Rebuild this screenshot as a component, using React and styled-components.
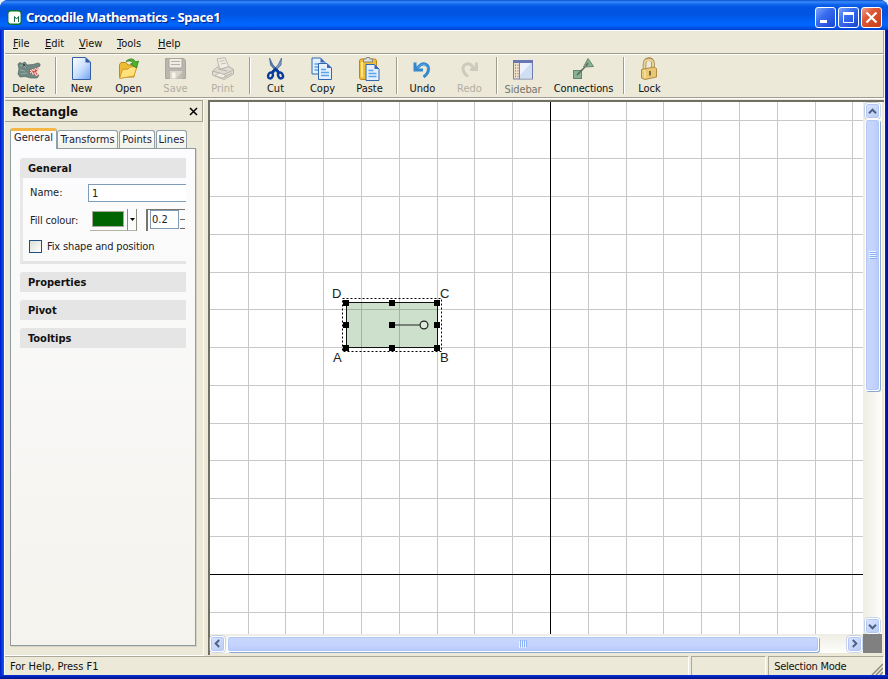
import React from "react";
import styled, { createGlobalStyle, css } from "styled-components";

const GlobalStyle = createGlobalStyle`
  * { box-sizing: border-box; }
  html, body { margin: 0; padding: 0; background: #e6edfb; overflow: hidden; }
  body {
    font-family: "DejaVu Sans Condensed", "DejaVu Sans", "Liberation Sans", sans-serif;
    font-stretch: condensed;
    font-size: 11px;
    line-height: 14px;
    color: #111;
  }
  svg { display: block; }
`;

const face = "#ece9d8";

const Window = styled.div`
  width: 888px;
  height: 679px;
  display: flex;
  flex-direction: column;
  border-radius: 8px 8px 0 0;
  overflow: hidden;
  background:
    linear-gradient(0deg, #00128c 0, #001fae 2px, #0831d9 4px, transparent 4px),
    linear-gradient(90deg, #0019c8 0, #0a3be0 2px, #1660e8 4px, #0831d9 10px, #0831d9 884px, #0a2fd6 885px, #0018b0 886px, #00129a 888px);
`;

const TitleBar = styled.header`
  height: 30px;
  flex: none;
  display: flex;
  align-items: center;
  padding: 4px 6px 0 7px;
  background: linear-gradient(180deg, #0a4fd0 0, #3a8dfa 2px, #1468f0 4px, #0055e2 7px, #0054e0 14px, #005ff5 20px, #0267ff 25px, #0059ee 27px, #003fcb 30px);
`;

const Title = styled.h1`
  flex: 1;
  margin: 0 0 0 4px;
  font: bold 13px/18px "Noto Sans", sans-serif;
  letter-spacing: -0.36px;
  color: #fff;
  text-shadow: 1px 1px 1px #0a1c7c;
`;

const Caption = styled.button`
  width: 21px;
  height: 21px;
  margin-left: 2px;
  padding: 0;
  border: 1px solid #fff;
  border-radius: 3px;
  background: ${(p) =>
    p.$close
      ? "linear-gradient(135deg, #f0a088 0, #dd5a38 35%, #c83c14 100%)"
      : "linear-gradient(135deg, #7ba4f8 0, #3a6cf0 40%, #1746d0 100%)"};
`;

const Body = styled.div`
  width: 881px;
  height: 645px;
  flex: none;
  margin-left: 4px;
  display: flex;
  flex-direction: column;
  background: ${face};
  border-left: 1px solid #fbfaf4;
  border-right: 1px solid #fbfaf4;
`;

const MenuBar = styled.nav`
  height: 24px;
  flex: none;
  display: flex;
  align-items: center;
  padding: 3px 0 0 8px;
  border-top: 1px solid #fff;
  border-bottom: 1px solid #9f9d8e;
  border-right: 1px solid #aca899;
`;

const MenuItem = styled.span`
  width: ${(p) => p.$w}px;
  &::first-letter { text-decoration: underline; }
`;

const ToolBar = styled.div`
  height: 44px;
  flex: none;
  display: flex;
  border-top: 1px solid #fff;
  border-bottom: 1px solid #9f9d8e;
  border-right: 1px solid #aca899;
`;

const ToolButton = styled.div`
  width: ${(p) => p.$w || 47}px;
  padding-top: ${(p) => (p.$low ? 3 : 2)}px;
  display: flex;
  flex-direction: column;
  align-items: center;
  gap: 1px;
  white-space: nowrap;
  letter-spacing: ${(p) => p.$ls || 0}px;
  color: ${(p) => (p.$low ? "#77756c" : p.$off ? "#b1aea2" : "#111")};
`;

const Separator = styled.i`
  width: 2px;
  height: 37px;
  margin: 2px 1px 0 3px;
  border-left: 1px solid #9f9d8e;
  border-right: 1px solid #fff;
`;

const Main = styled.main`
  flex: 1;
  min-height: 0;
  display: flex;
  border-top: 1px solid #fff;
  padding-top: 1px;
`;

const Sidebar = styled.aside`
  width: 199px;
  flex: none;
  display: flex;
  flex-direction: column;
  border-right: 1px solid #faf9f2;
  border-bottom: 1px solid #fff;
`;

const SidebarHeader = styled.div`
  height: 22px;
  flex: none;
  display: flex;
  align-items: center;
  justify-content: space-between;
  padding: 1px 4px 0 7px;
  border: 1px solid #a5a291;
  border-left: 0;
  font-size: 13px;
  font-weight: bold;
`;

const Tabs = styled.div`
  height: 25px;
  margin: 1px 0 0 5px;
  flex: none;
  display: flex;
  align-items: flex-end;
`;

const Tab = styled.div`
  width: ${(p) => p.$w}px;
  height: 18px;
  margin-right: 1px;
  padding-top: 2px;
  text-align: center;
  white-space: nowrap;
  border: 1px solid #91a0a8;
  border-bottom: 0;
  border-radius: 3px 3px 0 0;
  background: linear-gradient(#fff, #f1f1ea);
  color: #223;
  ${(p) =>
    p.$on &&
    css`
      height: 21px;
      margin-right: 0;
      margin-bottom: -1px;
      padding-top: 0;
      z-index: 1;
      border-top: 3px solid #f6b643;
      background: #fcfcfe;
    `}
`;

const TabPage = styled.div`
  width: 186px;
  height: 498px;
  margin-left: 5px;
  padding: 9px 9px 0;
  flex: none;
  border: 1px solid #919b9c;
  box-shadow: 1px 1px 0 #d5d2c2;
  background: linear-gradient(#fcfcfe, #f4f3ee);
`;

const SectionTitle = styled.div`
  height: 20px;
  padding: 4px 0 0 8px;
  margin-bottom: ${(p) => (p.$open ? 0 : 8)}px;
  background: #e5e5e5;
  border-radius: 3px 0 0 0;
  font-weight: bold;
  width: 166px;
`;

const SectionBody = styled.div`
  width: 166px;
  height: 86px;
  margin-bottom: 8px;
  border-left: 3px solid #e8e8e8;
  border-bottom: 3px solid #e5e5e5;
`;

const Field = styled.div`
  display: flex;
  align-items: center;
  height: ${(p) => p.$h}px;
  padding-left: ${(p) => p.$in || 7}px;
  color: #222;
`;

const FieldLabel = styled.span`
  width: ${(p) => p.$w}px;
  padding-top: ${(p) => p.$drop || 0}px;
  letter-spacing: ${(p) => p.$ls || 0}px;
  white-space: nowrap;
`;

const NameInput = styled.div`
  width: 98px;
  height: 18px;
  padding: 2px 3px;
  border: 1px solid #7f9db9;
  border-right: 0;
  background: #fff;
`;

const ColourWell = styled.div`
  width: 38px;
  height: 22px;
  padding: 2px 3px 3px 2px;
  border-right: 1px solid #8c8a80;
  border-bottom: 1px solid #b5b3a8;
`;

const Swatch = styled.div`
  height: 16px;
  background: #006400;
  border: 1px solid #aaa89c;
`;

const ColourDrop = styled.div`
  width: 9px;
  height: 22px;
  display: flex;
  align-items: center;
  justify-content: center;
  border-right: 1px solid #8c8a80;
  border-bottom: 1px solid #b5b3a8;
`;

const Opacity = styled.div`
  width: 39px;
  height: 22px;
  margin-left: 9px;
  display: flex;
  border-top: 1px solid #77756c;
  border-left: 2px solid #77756c;
  padding: 0 0 0 2px;
`;

const OpacityValue = styled.div`
  width: 29px;
  height: 19px;
  padding: 2px 1px;
  border: 1px solid #7f9db9;
  background: #fff;
`;

const CheckBox = styled.i`
  width: 13px;
  height: 13px;
  margin-right: 5px;
  border: 1px solid #1c5180;
  background: linear-gradient(135deg, #dcdcd7, #fff);
`;

const View = styled.section`
  width: 676px;
  height: 555px;
  margin-left: 4px;
  flex: none;
  display: grid;
  grid-template-columns: 653px 19px;
  grid-template-rows: 532px 19px;
  border-left: 2px solid #716f64;
  border-top: 2px solid #716f64;
`;

const VScroll = styled.div`
  display: flex;
  flex-direction: column;
  align-items: center;
  padding-top: 1px;
  background: linear-gradient(90deg, #eeede5, #fefefb);
`;

const HScroll = styled.div`
  display: flex;
  align-items: center;
  padding: 0 1px 0 0;
  background: linear-gradient(#eeede5, #fefefb);
`;

const ScrollButton = styled.div`
  width: 15px;
  height: 16px;
  flex: none;
  display: flex;
  align-items: center;
  justify-content: center;
  border: 1px solid #fff;
  border-radius: 3px;
  box-shadow: inset 0 0 0 1px #b4c8f6, 0 0 0 .5px #9ab1de;
  background: linear-gradient(135deg, #dbe5fe, #b9cbf3);
`;

const Thumb = styled.div`
  width: ${(p) => (p.$v ? 15 : 592)}px;
  height: ${(p) => (p.$v ? 272 : 16)}px;
  margin: ${(p) => (p.$v ? "0 0 auto 0" : "0 auto 0 2px")};
  display: flex;
  flex: none;
  align-items: center;
  justify-content: center;
  border: 1px solid #fff;
  border-radius: 3px;
  box-shadow: inset 0 0 0 1px #b4c8f6, 1px 1px 0 #8ba8d4;
  background: linear-gradient(${(p) => (p.$v ? "90deg" : "180deg")}, #c9d7fc, #c3d3fd 60%, #b5c9f9);
`;

const Corner = styled.div`background: #808080;`;

const StatusBar = styled.footer`
  height: 19px;
  flex: none;
  display: flex;
  gap: 2px;
`;

const StatusCell = styled.div`
  width: ${(p) => p.$w}px;
  padding: 3px 0 0 5px;
  letter-spacing: ${(p) => p.$ls || 0}px;
  display: flex;
  justify-content: space-between;
  border-top: 1px solid #aca899;
  border-left: ${(p) => (p.$first ? 0 : 1)}px solid #aca899;
  border-right: 1px solid #fff;
  white-space: nowrap;
`;

const Icon = ({ children }) => (
  <svg width="24" height="24" viewBox="0 0 24 24">{children}</svg>
);

const Page = ({ x, y }) => (
  <g transform={`translate(${x} ${y})`}>
    <path d="M.5.5H9L13.500 5V16.500H.5Z" fill="#e4f0ff" stroke="#3268b0" />
    <path d="M9 .5V5H13.500Z" fill="#3b67b5" />
    <path d="M3 6.500H8M3 9.500H11M3 12.500H11" stroke="#58a4ec" strokeWidth="1.300" />
  </g>
);

const icons = {
  Delete: (
    <Icon>
      <path d="M1 7L3 5.500L5 6.500L8 5L10 8L16 7.500L21 6L23 7V9L20 10.500L14 13L22 18.500L20 21L14 21L8 19.500L3 20L1 17L2 12Z" fill="#6f8883" stroke="#50665f" strokeWidth=".7" />
      <path d="M12 13L22 10L21 13L19 15L22 18.500L17 18L12 16Z" fill="#d0524e" />
      <path d="M13 13l1.500 1.500 1-2.500 1.500 2 1.500-3 1.500 2 1.500-3M13 16l2-1.500 1 3 2-2 1 3 2-1" fill="none" stroke="#f4f4e8" strokeWidth=".9" />
      <path d="M3 9l3-1 3 3M3 13l5 1M4 17l6-1" stroke="#93aaa2" fill="none" />
      <circle cx="7" cy="8" r="1" fill="#233a38" />
    </Icon>
  ),
  New: (
    <Icon>
      <defs><linearGradient id="pg" x2="1" y2="1"><stop stopColor="#fff" /><stop offset=".5" stopColor="#cce0ff" /><stop offset="1" stopColor="#6fa2ee" /></linearGradient></defs>
      <path d="M2.500.5H15.500L20.500 5V22.500H2.500Z" fill="url(#pg)" stroke="#3560a4" />
      <path d="M15.500 .5V5.500H20.500Z" fill="#31599d" />
    </Icon>
  ),
  Open: (
    <Icon>
      <path d="M2.500 20V7.500L4 5.500H9L11 8H17V20Z" fill="#eebb35" stroke="#c5881b" />
      <path d="M2.500 21.500L5.500 12.500L11 12L13 10L20 9.500L17 19Z" fill="#ffe27c" stroke="#d29a27" />
      <path d="M9 4.500C12 1 17 1 18.500 5L21.500 4L19.500 11L13.500 7L16 6C14.500 3.500 12 3.500 9 4.500Z" fill="#4db52c" stroke="#287e1c" strokeWidth=".8" />
    </Icon>
  ),
  Save: (
    <Icon>
      <path d="M1.500 1.500H20L21.500 3.500V21.500H1.500Z" fill="#b9b7ad" stroke="#aaa89e" />
      <path d="M5 1.500H18V11H5Z" fill="#efede3" stroke="#aaa89e" />
      <path d="M7 4.500H16M7 7.500H16" stroke="#b4b2a8" />
      <path d="M6 14H18V22H6Z" fill="#d9d7cd" />
      <path d="M8 15.500H11.500V21H8Z" fill="#f7f5eb" /><path d="M12 22L18 15V22Z" fill="#c1bfb5" />
    </Icon>
  ),
  Print: (
    <Icon>
      <path d="M6 2L14 .7L18 10L9 13Z" fill="#efede4" stroke="#bbb9af" />
      <path d="M8.500 4.500L13.500 3.500M10 7L15 6" stroke="#c0beb4" />
      <path d="M1.500 14L7 9.500L10 12L18 9.500L22.500 12.500V17L13 22.500L1.500 18Z" fill="#dedcd1" stroke="#b5b3a9" />
      <path d="M2 14L13 17.500L22 13M4 19L14 20L21 16M7 12L16 14" stroke="#b5b3a9" fill="none" />
      <path d="M8 16L15 18L12 21L4 19Z" fill="#f0eee4" stroke="#b4b2a7" strokeWidth=".7" />
    </Icon>
  ),
  Cut: (
    <Icon>
      <path d="M5.500 1L6.500 8L13.500 16L15 14L9 8Z" fill="#5a7ca8" stroke="#244f8c" strokeWidth=".6" />
      <path d="M17.500 1L17 8L9.500 16L8 14L14 8Z" fill="#819aba" stroke="#244f8c" strokeWidth=".6" />
      <ellipse cx="6.500" cy="18.500" rx="2.300" ry="3" fill="none" stroke="#073c9d" strokeWidth="2.400" transform="rotate(25 6.500 18.500)" />
      <ellipse cx="16.500" cy="18.500" rx="2.300" ry="3" fill="none" stroke="#073c9d" strokeWidth="2.400" transform="rotate(-25 16.500 18.500)" />
      <path d="M8 15.500L11.500 12L15 15.500" fill="none" stroke="#073c9d" strokeWidth="2.600" />
    </Icon>
  ),
  Copy: <Icon><Page x={0.5} y={0.5} /><Page x={7} y={6} /></Icon>,
  Paste: (
    <Icon>
      <rect x="1.500" y="2" width="17" height="20.500" rx="2" fill="#f1bd35" stroke="#bb8423" />
      <path d="M4 5V20" stroke="#ffe486" strokeWidth="2" />
      <path d="M5.500 5V2H8L8.500 .5H11.500L12 2H14.500V5Z" fill="#dedfdb" stroke="#848783" />
      <Page x={7.5} y={7} />
    </Icon>
  ),
  Undo: (
    <Icon>
      <path d="M4 5.500V13H12M5 12L9.500 8C13 5.500 17.500 7.500 17.500 12C17.500 15 16 17.500 12.500 20" fill="none" stroke="#3488cf" strokeWidth="3" />
      <path d="M6 11L10 8C13 6 17 8.500 17 12" fill="none" stroke="#55ade7" strokeWidth="1" />
    </Icon>
  ),
  Redo: (
    <Icon>
      <path d="M18.500 5.500V12.500H12M17 12L13 8C9.500 5.500 5 7.500 5 11.500C5 14.500 7 17.500 10 19.500" fill="none" stroke="#cdcbbf" strokeWidth="3" />
    </Icon>
  ),
  Sidebar: (
    <Icon>
      <rect x="2.500" y="2.500" width="19" height="18.500" fill="#eee1ce" stroke="#737eaf" />
      <path d="M2 2H22V5H2Z" fill="#6876b4" />
      <path d="M8.500 5H21V20.500H8.500Z" fill="#d0def4" /><path d="M9 5H20L9 17Z" fill="#edf3fc" />
      <path d="M8.500 5V21" stroke="#7887b9" />
      <path d="M4.500 6.500V20M7 6.500V20" stroke="#af8466" strokeDasharray="1.500 1.300" />
    </Icon>
  ),
  Connections: (
    <Icon>
      <path d="M6 17L17 6" stroke="#60675f" strokeWidth="1.500" />
      <rect x="1.500" y="13.500" width="8" height="8" fill="#87b193" stroke="#688571" />
      <path d="M16 1.500L21.500 9.500L11.500 10Z" fill="#87b193" stroke="#688571" />
      <path d="M5 18L10 13M14 9L16 6" stroke="#546a5b" strokeWidth="1.500" />
    </Icon>
  ),
  Lock: (
    <Icon>
      <path d="M6.500 12V7C6.500 1 14.500 0 15 6V11" fill="none" stroke="#a48a54" strokeWidth="3.600" />
      <path d="M6.500 12V7C6.500 2 14.500 1 15 6V11" fill="none" stroke="#ead493" strokeWidth="2" />
      <path d="M3.500 12.500L16 10L18.500 11.500V20L7 22.500L3.500 21Z" fill="#e8c875" stroke="#b28b41" />
      <path d="M5 13.500L7 14V21" stroke="#fff0ae" fill="none" /><path d="M12 14V18.500" stroke="#665131" strokeWidth="1.600" />
    </Icon>
  ),
};

const tools = [
  { name: "Delete" }, null,
  { name: "New" }, { name: "Open" }, { name: "Save", off: true }, { name: "Print", off: true }, null,
  { name: "Cut" }, { name: "Copy" }, { name: "Paste" }, null,
  { name: "Undo" }, { name: "Redo", off: true }, null,
  { name: "Sidebar", low: true, w: 48, ls: -0.15 }, { name: "Connections", w: 73, ls: -0.15 }, null,
  { name: "Lock" },
];

const Chevron = ({ turn }) => (
  <svg width="9" height="9" viewBox="0 0 9 9">
    <path d="M1 6.200L4.500 2.700L8 6.200" fill="none" stroke="#4d6185" strokeWidth="2" transform={`rotate(${turn} 4.500 4.500)`} />
  </svg>
);

const Grip = ({ turn }) => (
  <svg width="8" height="8" viewBox="0 0 8 8">
    <g transform={`rotate(${turn} 4 4)`}>
      <path d="M0 .5H7M0 2.500H7M0 4.500H7M0 6.500H7" stroke="#eef4fe" />
      <path d="M1 1.500H8M1 3.500H8M1 5.500H8M1 7.500H8" stroke="#8cb0f8" />
    </g>
  </svg>
);

const gridX = [248, 285, 323, 361, 399, 437, 474, 512, 588, 626, 663, 701, 739, 777, 815, 852];
const gridY = [120, 158, 196, 234, 272, 309, 347, 385, 423, 460, 498, 536, 612];
const handles = [[346, 303], [392, 303], [437, 303], [346, 325], [392, 325], [437, 325], [346, 348], [392, 348], [437, 348]];
const corners = [["D", 332, 298], ["C", 440, 298], ["A", 333, 362], ["B", 440, 362]];

const Drawing = () => (
  <svg width="653" height="532" viewBox="210 102 653 532" fontFamily="Liberation Sans, sans-serif" fontSize="13">
    <rect x="210" y="102" width="653" height="532" fill="#fff" />
    <g fill="#c8c8c8">
      {gridX.map((x) => <rect key={x} x={x} y="102" width="1" height="532" />)}
      {gridY.map((y) => <rect key={y} x="210" y={y} width="653" height="1" />)}
    </g>
    <rect x="550" y="102" width="1" height="532" />
    <rect x="210" y="574" width="653" height="1" />
    <rect x="346.500" y="302.500" width="91" height="45" fill="#006400" fillOpacity=".2" stroke="#111" />
    <rect x="342.500" y="298.500" width="99" height="53" fill="none" stroke="#000" strokeDasharray="2 2" />
    <path d="M392 325H420" stroke="#222" />
    <circle cx="424" cy="325" r="3.900" fill="#dcebdc" stroke="#222" strokeWidth="1.200" />
    {handles.map(([x, y]) => <rect key={`${x}-${y}`} x={x - 3} y={y - 3} width="6" height="6" />)}
    {corners.map(([t, x, y]) => <text key={t} x={x} y={y} fill="#222">{t}</text>)}
  </svg>
);

export default function App() {
  return (
    <>
      <GlobalStyle />
      <Window>
        <TitleBar>
          <svg width="15" height="15" viewBox="0 0 15 15">
            <rect x=".7" y=".7" width="13.600" height="13.600" rx="3" fill="#fff" stroke="#087238" strokeWidth="1.500" />
            <path d="M7.500 12V6.500L9.500 9L11.500 6.500V12" fill="none" stroke="#176b42" />
          </svg>
          <Title>Crocodile Mathematics - Space1</Title>
          <Caption aria-label="Minimize"><svg width="19" height="19"><rect x="4" y="12" width="7" height="3" fill="#fff" /></svg></Caption>
          <Caption aria-label="Maximize"><svg width="19" height="19"><path d="M4.500 5V14.500H14.500V5" fill="none" stroke="#fff" /><rect x="4" y="4" width="11" height="3" fill="#fff" /></svg></Caption>
          <Caption $close aria-label="Close"><svg width="19" height="19"><path d="M4.500 4.500L14.500 14.500M14.500 4.500L4.500 14.500" stroke="#fff" strokeWidth="2.200" /></svg></Caption>
        </TitleBar>
        <Body>
          <MenuBar>
            <MenuItem $w={32}>File</MenuItem>
            <MenuItem $w={34}>Edit</MenuItem>
            <MenuItem $w={38}>View</MenuItem>
            <MenuItem $w={41}>Tools</MenuItem>
            <MenuItem $w={40}>Help</MenuItem>
          </MenuBar>
          <ToolBar>
            {tools.map((t, i) =>
              t ? (
                <ToolButton key={t.name} $off={t.off} $low={t.low} $w={t.w} $ls={t.ls}>
                  {icons[t.name]}
                  {t.name}
                </ToolButton>
              ) : (
                <Separator key={i} />
              )
            )}
          </ToolBar>
          <Main>
            <Sidebar>
              <SidebarHeader>
                <span>Rectangle</span>
                <svg width="9" height="9"><path d="M1 1L8 8M8 1L1 8" stroke="#000" strokeWidth="1.500" /></svg>
              </SidebarHeader>
              <Tabs>
                <Tab $on $w={47}>General</Tab>
                <Tab $w={61}>Transforms</Tab>
                <Tab $w={36}>Points</Tab>
                <Tab $w={31}>Lines</Tab>
              </Tabs>
              <TabPage>
                <SectionTitle $open>General</SectionTitle>
                <SectionBody>
                  <Field $h={29}><FieldLabel $w={58}>Name:</FieldLabel><NameInput>1</NameInput></Field>
                  <Field $h={26}>
                    <FieldLabel $w={60} $drop={1} $ls={-0.15}>Fill colour:</FieldLabel>
                    <ColourWell><Swatch /></ColourWell>
                    <ColourDrop><svg width="5" height="3"><path d="M0 0H5L2.500 3Z" /></svg></ColourDrop>
                    <Opacity>
                      <OpacityValue>0.2</OpacityValue>
                      <svg width="6" height="19"><path d="M1 9.500H6M1 18.500H6" stroke="#77655c" /></svg>
                    </Opacity>
                  </Field>
                  <Field $h={27} $in={6}><CheckBox /><FieldLabel $drop={1} $ls={-0.15}>Fix shape and position</FieldLabel></Field>
                </SectionBody>
                <SectionTitle>Properties</SectionTitle>
                <SectionTitle>Pivot</SectionTitle>
                <SectionTitle>Tooltips</SectionTitle>
              </TabPage>
            </Sidebar>
            <View>
              <Drawing />
              <VScroll>
                <ScrollButton><Chevron turn={0} /></ScrollButton>
                <Thumb $v><Grip turn={0} /></Thumb>
                <ScrollButton><Chevron turn={180} /></ScrollButton>
              </VScroll>
              <HScroll>
                <ScrollButton><Chevron turn={-90} /></ScrollButton>
                <Thumb><Grip turn={-90} /></Thumb>
                <ScrollButton><Chevron turn={90} /></ScrollButton>
              </HScroll>
              <Corner />
            </View>
          </Main>
          <StatusBar>
            <StatusCell $first $w={685}>For Help, Press F1</StatusCell>
            <StatusCell $w={75} />
            <StatusCell $w={116} $ls={-0.25}>
              <span>Selection Mode</span>
              <svg width="13" height="15"><path d="M2 15L13 4M6 15L13 8M10 15L13 12" stroke="#8f8d80" strokeWidth="1.500" /></svg>
            </StatusCell>
          </StatusBar>
        </Body>
      </Window>
    </>
  );
}
